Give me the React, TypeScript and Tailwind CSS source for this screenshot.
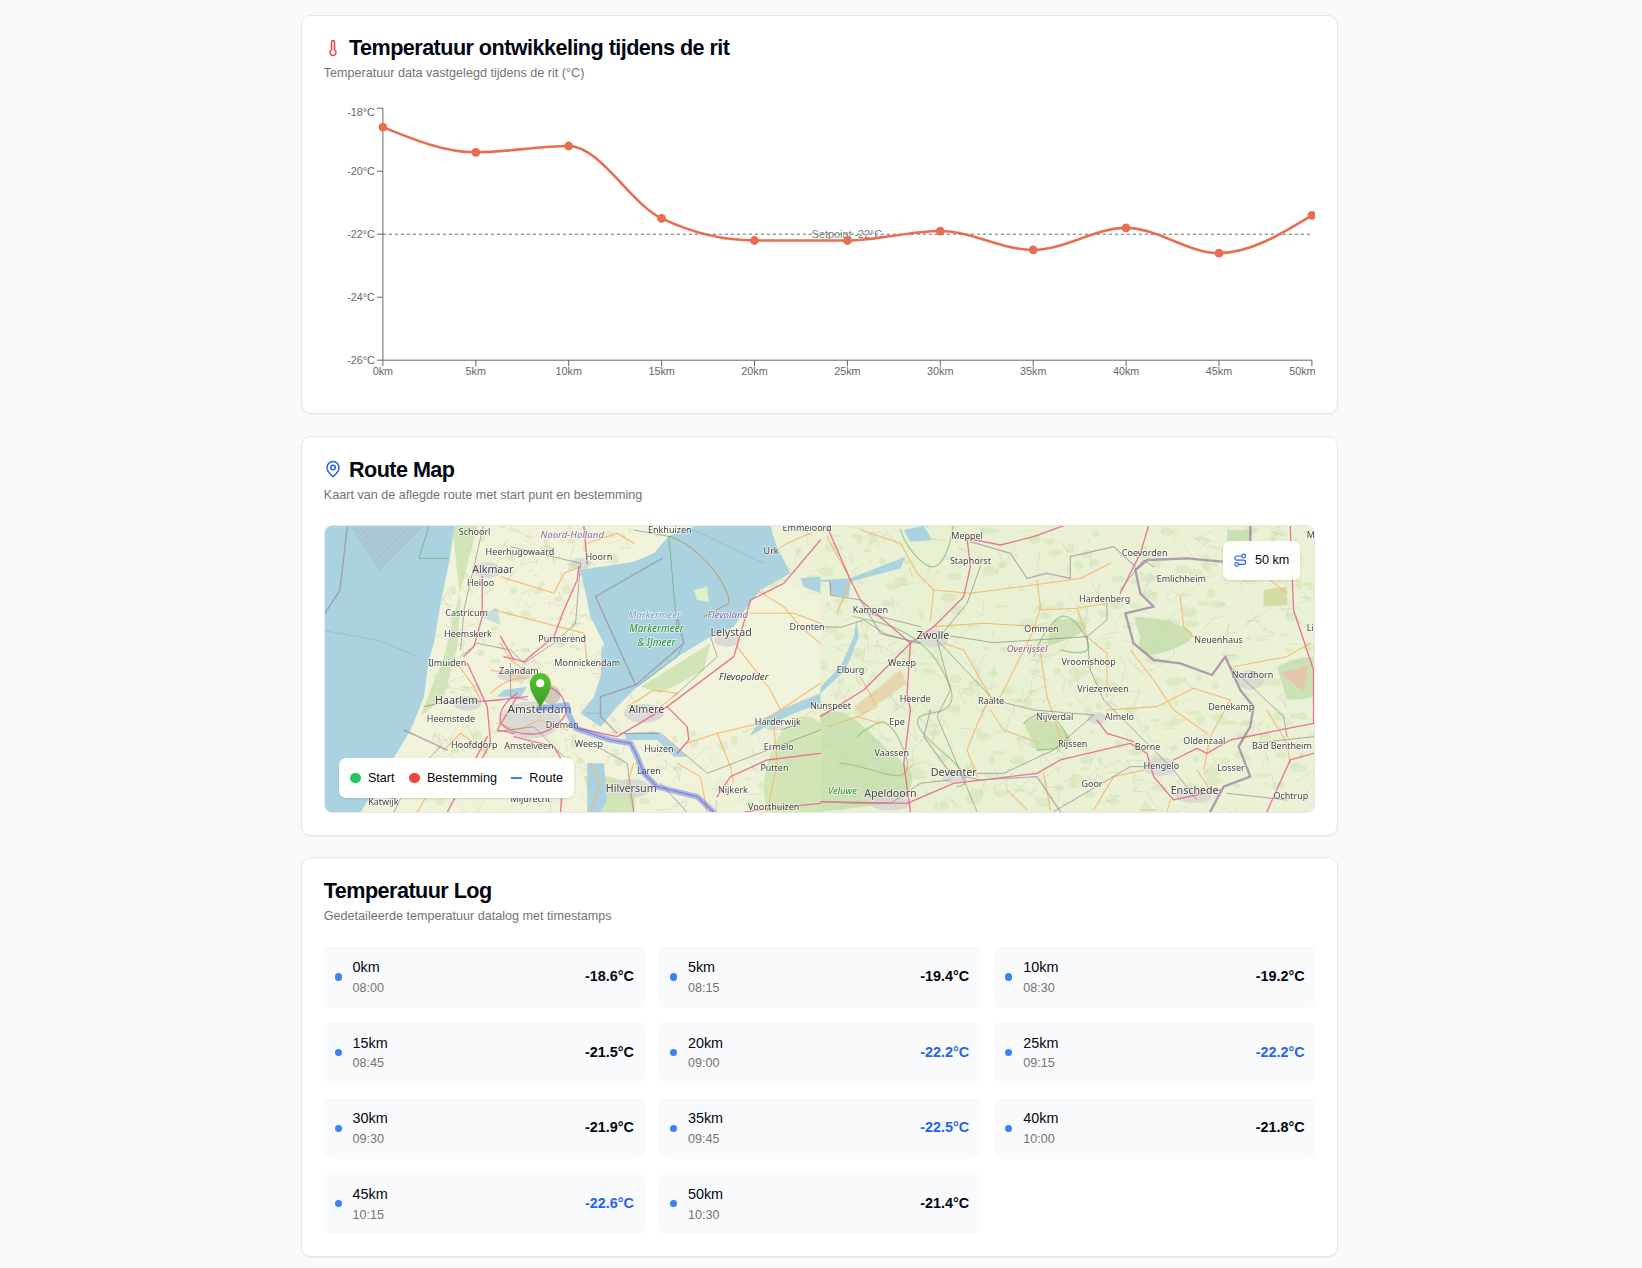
import type { ReactNode } from "react"
import { MapPin, Route, Thermometer } from "lucide-react"

type Reading = { km: number; time: string; temp: number }

const READINGS: Reading[] = [
  { km: 0, time: "08:00", temp: -18.6 },
  { km: 5, time: "08:15", temp: -19.4 },
  { km: 10, time: "08:30", temp: -19.2 },
  { km: 15, time: "08:45", temp: -21.5 },
  { km: 20, time: "09:00", temp: -22.2 },
  { km: 25, time: "09:15", temp: -22.2 },
  { km: 30, time: "09:30", temp: -21.9 },
  { km: 35, time: "09:45", temp: -22.5 },
  { km: 40, time: "10:00", temp: -21.8 },
  { km: 45, time: "10:15", temp: -22.6 },
  { km: 50, time: "10:30", temp: -21.4 },
]

const AXIS = "#666666"
const LINE = "#e76e50"
const X0 = 58.9
const XSTEP = 92.9
const Y0 = 4.2
const YSTEP = 31.5

const xAt = (i: number) => X0 + i * XSTEP
const yAt = (t: number) => Y0 + (-18 - t) * YSTEP

// same curve as d3 curveMonotoneX
function monotonePath(pts: [number, number][]) {
  const n = pts.length
  const d: number[] = []
  const m: number[] = []
  for (let i = 0; i < n - 1; i++) {
    d.push((pts[i + 1][1] - pts[i][1]) / (pts[i + 1][0] - pts[i][0]))
  }
  for (let i = 1; i < n - 1; i++) {
    const h0 = pts[i][0] - pts[i - 1][0]
    const h1 = pts[i + 1][0] - pts[i][0]
    const p = (d[i - 1] * h1 + d[i] * h0) / (h0 + h1)
    m[i] =
      (Math.sign(d[i - 1]) + Math.sign(d[i])) *
        Math.min(Math.abs(d[i - 1]), Math.abs(d[i]), 0.5 * Math.abs(p)) || 0
  }
  m[0] = (3 * d[0] - m[1]) / 2
  m[n - 1] = (3 * d[n - 2] - m[n - 2]) / 2
  let path = `M${pts[0][0]},${pts[0][1]}`
  for (let i = 0; i < n - 1; i++) {
    const h = (pts[i + 1][0] - pts[i][0]) / 3
    path += `C${pts[i][0] + h},${pts[i][1] + h * m[i]} ${pts[i + 1][0] - h},${pts[i + 1][1] - h * m[i + 1]} ${pts[i + 1][0]},${pts[i + 1][1]}`
  }
  return path
}

function TemperatureChart() {
  const pts = READINGS.map((r, i) => [xAt(i), yAt(r.temp)] as [number, number])
  return (
    <svg viewBox="0 0 991.6 288" className="block h-[288px] w-full">
      <line x1={X0} y1={yAt(-22)} x2={xAt(10)} y2={yAt(-22)} stroke={AXIS} strokeDasharray="3 3" />
      <text x={523} y={yAt(-22) + 3.7} textAnchor="middle" fontSize="10.8" fill="#808080">
        Setpoint -22°C
      </text>
      <line x1={X0} y1={Y0} x2={X0} y2={yAt(-26)} stroke={AXIS} />
      <line x1={X0} y1={yAt(-26)} x2={xAt(10)} y2={yAt(-26)} stroke={AXIS} />
      {[-18, -20, -22, -24, -26].map((t) => (
        <g key={t}>
          <line x1={X0 - 6} y1={yAt(t)} x2={X0} y2={yAt(t)} stroke={AXIS} />
          <text
            x={X0 - 8}
            y={(t === -18 ? yAt(t) + 4 : yAt(t)) + 3.7}
            textAnchor="end"
            fontSize="10.8"
            fill={AXIS}
          >
            {t}°C
          </text>
        </g>
      ))}
      {READINGS.map((r, i) => (
        <g key={r.km}>
          <line x1={xAt(i)} y1={yAt(-26)} x2={xAt(i)} y2={yAt(-26) + 6} stroke={AXIS} />
          <text
            x={i === 10 ? 991.6 : xAt(i)}
            y={270.5}
            textAnchor={i === 10 ? "end" : "middle"}
            fontSize="10.8"
            fill={AXIS}
          >
            {r.km}km
          </text>
        </g>
      ))}
      <path d={monotonePath(pts)} fill="none" stroke={LINE} strokeWidth="2.6" />
      {pts.map(([x, y]) => (
        <circle key={x} cx={x} cy={y} r="4.4" fill={LINE} />
      ))}
    </svg>
  )
}

type Label = [number, number, string, number?, string?, boolean?]

const WEST_LABELS: Label[] = [
  [522, 306, "Schoorl"],
  [815, 314, "Noord-Holland", 29, "#8a6a9c", true],
  [1108, 301, "Enkhuizen"],
  [1520, 295, "Emmeloord"],
  [1412, 363, "Urk"],
  [658, 367, "Heerhugowaard"],
  [895, 382, "Hoorn"],
  [577, 418, "Alkmaar", 32],
  [540, 460, "Heiloo"],
  [498, 550, "Castricum"],
  [502, 613, "Heemskerk"],
  [785, 627, "Purmerend"],
  [1062, 555, "Markermeer", 29, "#7f9fc4", true],
  [1068, 597, "Markermeer", 30, "#2f8f2f", true],
  [1068, 637, "& IJmeer", 30, "#2f8f2f", true],
  [1282, 553, "Flevoland", 29, "#8a6a9c", true],
  [1292, 607, "Lelystad", 32],
  [1520, 592, "Dronten"],
  [440, 700, "IJmuiden"],
  [860, 700, "Monnickendam"],
  [655, 723, "Zaandam"],
  [1330, 740, "Flevopolder", 29, "#333333", true],
  [468, 810, "Haarlem", 32],
  [717, 836, "Amsterdam", 35],
  [1038, 838, "Almere", 32],
  [451, 868, "Heemstede"],
  [785, 884, "Diemen"],
  [1432, 877, "Harderwijk"],
  [521, 944, "Hoofddorp"],
  [685, 947, "Amstelveen"],
  [865, 942, "Weesp"],
  [1435, 952, "Ermelo"],
  [1075, 958, "Huizen"],
  [1045, 1022, "Laren"],
  [1422, 1015, "Putten"],
  [992, 1074, "Hilversum", 32],
  [1297, 1080, "Nijkerk"],
  [1420, 1131, "Voorthuizen"],
  [248, 1115, "Katwijk"],
  [690, 1107, "Mijdrecht"],
]

const EAST_LABELS: Label[] = [
  [440, 77, "Meppel"],
  [450, 152, "Staphorst"],
  [973, 130, "Coevorden"],
  [1083, 208, "Emlichheim"],
  [853, 268, "Hardenberg"],
  [150, 300, "Kampen"],
  [663, 357, "Ommen"],
  [338, 375, "Zwolle", 32],
  [1195, 390, "Neuenhaus"],
  [620, 415, "Overijssel", 29, "#8a5a8c", true],
  [805, 455, "Vroomshoop"],
  [90, 480, "Elburg"],
  [245, 458, "Wezep"],
  [1297, 494, "Nordhorn"],
  [848, 537, "Vriezenveen"],
  [284, 568, "Heerde"],
  [512, 574, "Raalte"],
  [1233, 592, "Denekamp"],
  [30, 587, "Nunspeet"],
  [703, 620, "Nijverdal"],
  [897, 621, "Almelo"],
  [230, 635, "Epe"],
  [1152, 694, "Oldenzaal"],
  [757, 703, "Rijssen"],
  [982, 710, "Borne"],
  [1385, 709, "Bad Bentheim"],
  [214, 728, "Vaassen"],
  [1023, 767, "Hengelo"],
  [1232, 773, "Losser"],
  [400, 787, "Deventer", 32],
  [815, 822, "Goor"],
  [1123, 840, "Enschede", 32],
  [210, 850, "Apeldoorn", 32],
  [66, 843, "Veluwe", 28, "#2f8f2f", true],
  [1412, 857, "Ochtrup"],
  [1472, 75, "M"],
  [1470, 355, "Li"],
]

const WEST_ORANGE = [
  "M600 440L760 490L790 430L840 410",
  "M580 540L850 610L860 700",
  "M600 640L630 690L700 740L760 770",
  "M470 700L520 770L540 810",
  "M570 720L660 740",
  "M860 340L950 310L1000 340",
  "M1370 480L1450 530L1500 590L1560 640",
  "M1350 550L1480 550L1560 580",
  "M1310 650L1410 780L1440 840",
  "M1160 940L1250 910L1380 880L1560 760",
  "M1250 910L1290 1010L1300 1060",
  "M1420 890L1430 1000L1400 1147",
  "M1000 1000L980 1060L1000 1147",
  "M870 1000L900 1060L870 1147",
  "M1400 380L1460 340L1530 310",
  "M430 960L480 910L560 970",
  "M1080 830L1130 790L1060 780L980 830",
  "M350 1147L400 1060L480 990",
  "M570 790Q620 740 680 745",
  "M590 880L650 900L720 870L800 900",
  "M1130 1000L1200 1040L1220 1147",
]

const WEST_PINK = [
  "M835 410L830 450L790 540L760 620L700 670L670 695L610 680",
  "M850 288L860 400",
  "M545 440L545 560L520 650L490 680",
  "M500 700L560 830L570 940L530 1010",
  "M680 800L590 810L535 815",
  "M810 890L950 920L1100 830L1300 680L1350 510L1450 460L1560 330",
  "M1100 830L1160 890L1165 930L1130 970",
  "M600 620L640 690",
  "M640 920L760 950L790 1000L780 1147",
  "M1250 1100L1290 1040L1400 990L1560 970",
  "M560 920L440 1147",
  "M650 800L590 900L640 910",
  "M1330 1147L1370 1140L1560 1120",
  "M740 770Q800 790 795 850Q780 890 720 910Q640 920 600 880Q590 830 650 790",
]

const WEST_RAIL = [
  "M630 350L840 400",
  "M840 400L825 580L760 640L670 700L630 660L530 640L480 680",
  "M630 700L630 800L680 810",
  "M535 815L440 815L370 830",
  "M590 905L700 890L790 980",
  "M960 910L1080 910L1220 1030L1560 900",
  "M1230 620L1250 680L1120 800",
  "M1000 1147L980 1000L890 950",
  "M1080 1060L1160 1147",
  "M1440 900L1500 880",
  "M280 1147L330 1040L420 950",
  "M1000 300L1110 320",
  "M550 280L490 540L480 660",
]

const EAST_ORANGE = [
  "M340 240L450 250L640 225L780 205L870 160",
  "M660 290L660 300L770 295L860 280",
  "M120 60L240 100L290 190L340 240L330 330",
  "M20 80L90 210L50 310",
  "M340 350L490 340L660 350",
  "M370 400L430 420L510 560L480 620L440 720L470 800",
  "M650 210L660 290L640 360L580 480L540 560",
  "M770 295L800 380L860 430L860 560",
  "M930 420L1000 510L1060 600L1160 670",
  "M1080 260L1090 350L1130 390",
  "M860 600L1010 590L1120 535L1230 570L1170 680L1150 780",
  "M510 600L550 660L660 700",
  "M120 500L170 590L110 620L180 640",
  "M670 790L690 900",
  "M560 840L620 900",
  "M660 430L680 560L720 680",
  "M1300 170L1400 250",
  "M1470 400L1400 440L1240 470",
  "M1340 600L1400 700L1410 760",
  "M970 780L880 800L820 900",
  "M1050 870L1040 905",
  "M280 760L240 800",
  "M960 900L1010 900",
  "M20 650L110 620",
  "M1130 780L1170 840",
]

const EAST_PINK = [
  "M20 50L90 210L120 270L270 400L340 350L430 260L450 170L440 85",
  "M440 85L540 105L640 80L730 47",
  "M270 400L260 550L270 600L250 760L270 905",
  "M0 875L260 880L400 820L650 790L720 750L930 700L980 730L1000 800L1060 870L1200 840",
  "M830 630L860 670L940 695",
  "M1410 47L1420 300L1480 480L1480 640",
  "M1060 750L1130 715L1160 730L1230 690L1480 640",
  "M1340 905L1410 750L1480 730",
  "M0 620L130 540L270 400",
  "M985 47L960 130L900 250",
]

const EAST_RAIL = [
  "M100 300L300 350",
  "M350 390L520 570L640 600L820 615",
  "M390 378L520 398L800 380L860 330L860 280",
  "M800 380L810 480L850 570L1060 780L1130 870",
  "M480 170L440 280L350 390",
  "M350 390L390 540L350 620L470 905",
  "M0 350L60 352L130 330L200 375L300 400",
  "M470 790L550 790L700 720L820 615",
  "M700 905L930 770L1000 770",
  "M1220 850L1400 870",
  "M0 875L100 880L210 880L300 820L390 810",
  "M1230 470L1390 620L1400 680",
  "M1300 700L1480 680",
  "M900 240L970 150L1000 170",
]

const EAST_GREEN = [
  "M100 320Q150 330 200 345T300 400T385 520T330 610T360 720T410 830",
  "M240 60Q260 120 310 160T390 90T320 50",
  "M640 440Q660 380 700 335T790 370T720 420",
  "M110 680Q130 660 170 640T250 720T190 790T60 760",
  "M610 640Q630 620 660 610T730 660T650 720",
]

// fine field pattern under the main roads, fixed seed so it stays the same
function makeTexture() {
  let seed = 7
  const rnd = () => {
    seed = (seed * 16807) % 2147483647
    return seed / 2147483647
  }
  const blobs: { x: number; y: number; rx: number; ry: number }[] = []
  const lanes: { d: string; warm: boolean }[] = []
  for (let i = 0; i < 520; i++) {
    const x = 110 + rnd() * 880
    blobs.push({ x, y: rnd() * 286, rx: 1.5 + rnd() * (x > 480 ? 7 : 4), ry: 1 + rnd() * 4 })
  }
  for (let i = 0; i < 520; i++) {
    const x = 110 + rnd() * 880
    const y = rnd() * 286
    const x1 = x + (rnd() - 0.5) * 32
    const y1 = y + (rnd() - 0.5) * 32
    const x2 = x1 + (rnd() - 0.5) * 32
    const y2 = y1 + (rnd() - 0.5) * 32
    lanes.push({ d: `M${x} ${y}L${x1} ${y1}L${x2} ${y2}`, warm: rnd() < 0.22 })
  }
  return { blobs, lanes }
}

const TEXTURE = makeTexture()

function MapLines({ d, stroke, width, opacity = 1 }: { d: string[]; stroke: string; width: number; opacity?: number }) {
  return (
    <g fill="none" stroke={stroke} strokeWidth={width} strokeOpacity={opacity} strokeLinejoin="round" strokeLinecap="round">
      {d.map((p) => (
        <path key={p} d={p} />
      ))}
    </g>
  )
}

function MapLabels({ items }: { items: Label[] }) {
  return (
    <g fontFamily="'Noto Sans', sans-serif" textAnchor="middle">
      {items.map(([x, y, text, size = 27, color = "#454545", italic]) => (
        <text
          key={`${text}${y}`}
          x={x}
          y={y + size * 0.35}
          fontSize={size}
          fill={color}
          fontStyle={italic ? "italic" : "normal"}
          stroke="#ffffff"
          strokeOpacity="0.6"
          strokeWidth="5"
          paintOrder="stroke"
        >
          {text}
        </text>
      ))}
    </g>
  )
}

const WEST = "translate(-24.33,-96) scale(0.3333)"
const EAST = "translate(495.67,-16) scale(0.3333)"

function RouteMapArt() {
  return (
    <svg viewBox="0 0 990 286" preserveAspectRatio="none" className="absolute inset-0 h-full w-full blur-[0.45px]">
      <defs>
        <pattern id="hatch" width="14" height="14" patternUnits="userSpaceOnUse" patternTransform="rotate(45)">
          <rect width="14" height="14" fill="#a9c9d7" />
          <line x1="0" y1="0" x2="0" y2="14" stroke="#9fb5c4" strokeWidth="2.5" />
        </pattern>
        <linearGradient id="pin" x1="0" y1="0" x2="0" y2="1">
          <stop offset="0" stopColor="#58c42f" />
          <stop offset="1" stopColor="#3b9a2a" />
        </linearGradient>
        <linearGradient id="land" x1="0" y1="0" x2="1" y2="0">
          <stop offset="0.35" stopColor="#f0f2da" />
          <stop offset="0.6" stopColor="#e8f0d2" />
          <stop offset="1" stopColor="#ebf1d6" />
        </linearGradient>
      </defs>

      {/* land and fields */}
      <rect width="990" height="286" fill="url(#land)" />
      <g fill="#cfe6b6" opacity="0.5">
        {TEXTURE.blobs.map((b, i) => (
          <ellipse key={i} cx={b.x} cy={b.y} rx={b.rx} ry={b.ry} />
        ))}
      </g>
      <g fill="none" strokeWidth="0.6" strokeOpacity="0.55">
        {TEXTURE.lanes.map((l, i) => (
          <path key={i} d={l.d} stroke={l.warm ? "#f7c78c" : "#bcbfae"} />
        ))}
      </g>

      <g transform={EAST}>
        <g fill="#c2dca8" opacity="0.75">
          <path d="M0 610Q70 590 130 650T250 760T230 880L0 905Z" />
          <path d="M610 640Q660 600 730 660T650 720Z" />
          <path d="M940 320Q1020 320 1090 350T1050 420T960 380Z" />
          <path d="M1220 60H1300L1280 110H1220Z" />
          <path d="M1370 470Q1430 440 1480 440V560Q1440 570 1400 570Z" />
          <path d="M700 330Q750 320 790 340T680 410Z" />
        </g>
        <path d="M100 590L240 480L260 520L125 615Z" fill="#e6d3ac" opacity="0.9" />
        <path d="M1380 490L1465 465L1450 545Z" fill="#e8c0a8" opacity="0.8" />
        <path d="M1330 240L1400 230L1400 285L1330 290Z" fill="#d2dca4" />
        <g fill="#d6d6d2" opacity="0.8">
          <ellipse cx="340" cy="385" rx="40" ry="28" />
          <ellipse cx="830" cy="625" rx="28" ry="18" />
          <ellipse cx="1020" cy="770" rx="50" ry="28" />
          <ellipse cx="1120" cy="855" rx="55" ry="24" />
          <ellipse cx="1290" cy="510" rx="40" ry="30" />
          <ellipse cx="210" cy="880" rx="60" ry="22" />
          <ellipse cx="400" cy="800" rx="35" ry="20" />
        </g>
      </g>

      <g transform={WEST}>
        {/* Flevoland polder is plainer than the rest */}
        <path d="M1010 770L1230 620L1340 530L1450 460L1560 500V780L1380 870L1250 910L1160 900L1100 830Z" fill="#f1f3dc" opacity="0.85" />
        <g fill="#cde3b2" opacity="0.85">
          <path d="M455 288L530 288L470 520L430 680L390 780L360 860L430 800L470 650L480 520Z" />
          <path d="M1400 1147Q1370 1040 1430 930T1560 880V1147Z" />
          <path d="M850 1040Q900 1030 960 1050T1000 1147H880Z" />
          <path d="M1020 770L1230 640L1210 720L1080 790Z" />
        </g>
        <g fill="#d6d6d2" opacity="0.85">
          <ellipse cx="690" cy="870" rx="90" ry="55" />
          <ellipse cx="500" cy="820" rx="42" ry="22" />
          <ellipse cx="1030" cy="850" rx="60" ry="28" />
          <ellipse cx="1280" cy="630" rx="40" ry="20" />
          <ellipse cx="990" cy="1075" rx="60" ry="28" />
          <ellipse cx="640" cy="735" rx="50" ry="20" />
          <ellipse cx="840" cy="400" rx="30" ry="16" />
          <ellipse cx="560" cy="420" rx="42" ry="24" />
          <ellipse cx="1420" cy="885" rx="32" ry="16" />
        </g>
        <circle cx="752" cy="795" r="28" fill="#a8a29a" opacity="0.5" />
      </g>

      {/* water goes over the fields */}
      <g transform={WEST} fill="#aad3df">
        <path d="M440 288H73V1147H180L270 1000L330 900L370 800L385 690L400 640L420 520L445 400L462 288Z" />
        <path d="M840 420L1000 395L1060 370L1105 318L1185 288H1410L1425 340L1470 430L1380 480L1340 530L1300 590L1230 620L1130 680L1010 770L950 830L900 890L840 850L880 800L900 740L910 640L870 560Z" />
        <path d="M1500 445L1560 440V490L1510 470Z" />
        <path d="M970 910L1070 905L1160 980L1120 980L1070 930L980 930Z" />
        <path d="M1560 790L1440 840L1380 870L1345 920L1395 890L1470 855L1560 820Z" />
        <path d="M860 1000L910 1000L920 1110L900 1147H860Z" />
        <path d="M610 780L680 770L660 800L590 800Z" />
        <path d="M540 560L590 530L600 585Z" opacity="0.6" />
      </g>
      <g transform={WEST}>
        <path d="M150 288H370L235 422Z" fill="url(#hatch)" />
        <path d="M1180 480L1220 470L1225 515L1190 510Z" fill="#dfeecb" />
      </g>
      <g transform={EAST} fill="#aad3df">
        <path d="M0 210L90 205L230 150L255 140L240 175L90 215L85 260L30 255L25 215H0Z" />
        <path d="M0 530L60 470L100 380L108 330L115 380L75 480L0 550Z" />
        <path d="M250 60L310 47L335 90L270 95Z" />
      </g>

      <g transform={EAST}>
        <MapLines d={EAST_GREEN} stroke="#86c07a" width={4} opacity={0.7} />
        <MapLines d={EAST_ORANGE} stroke="#f8b870" width={3.2} />
        <MapLines d={EAST_RAIL} stroke="#7a7a7a" width={2.2} opacity={0.8} />
        <MapLines d={EAST_PINK} stroke="#e8688c" width={4} opacity={0.9} />
        <MapLines
          d={[
            "M1205 155L1100 145L980 150L945 180L960 250L1000 290L915 310L940 400L1000 450L1080 460L1175 495L1215 440L1260 540L1300 590L1290 650L1255 710L1290 800L1210 830L1170 905",
            "M1290 47V100",
          ]}
          stroke="#9a7f9f"
          width={7}
          opacity={0.75}
        />
        <MapLines
          d={[
            "M450 95L570 130L620 205L680 190L750 205L750 140L880 110L945 170",
            "M30 215V255L120 270L180 370L300 400",
            "M330 600L310 680L390 790L480 810L650 800L720 905",
          ]}
          stroke="#a58ea8"
          width={3.5}
          opacity={0.75}
        />
        <MapLabels items={EAST_LABELS} />
      </g>

      <g transform={WEST}>
        <MapLines d={["M385 288L355 385H440", "M1105 320L1130 600", "M1010 770L1130 680L1145 650"]} stroke="#7fb59a" width={3} />
        <MapLines d={["M1110 320C1200 350 1290 470 1285 520L1210 560"]} stroke="#b89a5c" width={3} />
        <MapLines d={["M1180 300L1390 400", "M73 603L230 630L350 680", "M905 650L905 720", "M860 850L920 850"]} stroke="#9ab4e0" width={2.5} />
        <MapLines d={WEST_ORANGE} stroke="#f8b870" width={3.2} />
        <MapLines d={WEST_RAIL} stroke="#7a7a7a" width={2.2} opacity={0.8} />
        <MapLines d={WEST_PINK} stroke="#e8688c" width={4} opacity={0.9} />
        <MapLines
          d={[
            "M140 288L118 480L73 550",
            "M1085 385L885 500L1005 765L900 800L900 860L950 910",
            "M1005 765L1150 640L1130 560",
            "M310 900L440 960",
          ]}
          stroke="#9a7f9f"
          width={4.5}
          opacity={0.6}
        />
        <MapLabels items={WEST_LABELS} />
        <MapLines
          d={["M715 835L800 825L805 855L825 895L930 930L990 940L1010 980L1030 1030L1070 1070L1190 1100L1240 1147"]}
          stroke="#3b6ff0"
          width={17}
          opacity={0.42}
        />
        <MapLines
          d={["M825 895L930 930L990 940L1010 980L1030 1030L1070 1070L1190 1100L1240 1147"]}
          stroke="#8f3fb0"
          width={3.5}
          opacity={0.55}
        />
        <path
          d="M719 835C712 812 688 792 688 762A31.5 33 0 0 1 751 762C751 792 727 812 719 835Z"
          fill="url(#pin)"
        />
        <circle cx="719" cy="760" r="12" fill="#ffffff" />
      </g>
    </svg>
  )
}

function Card({ icon, title, subtitle, children }: { icon?: ReactNode; title: string; subtitle: string; children: ReactNode }) {
  return (
    <section className="rounded-[10px] border border-[#e5e7eb] bg-white p-[21.6px] shadow-[0_1px_2px_rgba(0,0,0,0.06)]">
      <h2 className="flex items-center gap-[7.2px] text-[21.6px] leading-[21.6px] font-bold tracking-[-0.54px] text-[#030712]">
        {icon}
        {title}
      </h2>
      <p className="mt-[5.4px] text-[12.6px] leading-[18px] text-[#737373]">{subtitle}</p>
      <div className="mt-[21.6px]">{children}</div>
    </section>
  )
}

function LogCell({ reading }: { reading: Reading }) {
  return (
    <div className="flex items-center justify-between rounded-[7px] bg-[#f9fafb] p-[10.8px]">
      <div className="flex items-center gap-[10.8px]">
        <span className="size-[7.2px] rounded-full bg-[#3b82f6]" />
        <div>
          <div className="text-[14.4px] leading-[21.6px] text-[#030712]">{reading.km}km</div>
          <div className="text-[12.6px] leading-[18px] text-[#737373]">{reading.time}</div>
        </div>
      </div>
      <span className={reading.temp <= -22 ? "text-[14.4px] font-bold text-[#2563eb]" : "text-[14.4px] font-bold text-[#030712]"}>
        {reading.temp.toFixed(1)}°C
      </span>
    </div>
  )
}

export default function App() {
  return (
    <div className="min-h-[1268px] bg-[#f9fafb] font-['Liberation_Sans',Arial,sans-serif]">
      <div className="ml-[301.2px] flex w-[1036.8px] flex-col gap-[21.6px] pt-[14.6px]">
        <Card
          icon={<Thermometer className="size-[18px] text-[#ef4444]" />}
          title="Temperatuur ontwikkeling tijdens de rit"
          subtitle="Temperatuur data vastgelegd tijdens de rit (°C)"
        >
          <TemperatureChart />
        </Card>

        <Card
          icon={<MapPin className="size-[18px] text-[#2563eb]" />}
          title="Route Map"
          subtitle="Kaart van de aflegde route met start punt en bestemming"
        >
          <div className="relative h-[288px] overflow-hidden rounded-[8px] border border-[#e5e7eb]">
            <RouteMapArt />
            <div className="absolute top-[14.4px] right-[14.4px] flex items-center gap-[7.2px] rounded-[7px] bg-white/95 p-[10.8px] text-[12.6px] leading-[18px] text-[#030712] shadow-sm">
              <Route className="size-[14.4px] text-[#2563eb]" />
              50 km
            </div>
            <div className="absolute bottom-[14.4px] left-[14.4px] flex items-center gap-[14.4px] rounded-[7px] bg-white/95 p-[10.8px] text-[12.6px] leading-[18px] text-[#030712] shadow-sm">
              <div className="flex items-center gap-[7.2px]">
                <span className="size-[10.8px] rounded-full bg-[#22c55e]" />
                Start
              </div>
              <div className="flex items-center gap-[7.2px]">
                <span className="size-[10.8px] rounded-full bg-[#ef4444]" />
                Bestemming
              </div>
              <div className="flex items-center gap-[7.2px]">
                <span className="h-[2px] w-[10.8px] bg-[#3b82f6]" />
                Route
              </div>
            </div>
          </div>
        </Card>

        <Card title="Temperatuur Log" subtitle="Gedetaileerde temperatuur datalog met timestamps">
          <div className="grid grid-cols-3 gap-[14.4px]">
            {READINGS.map((r) => (
              <LogCell key={r.km} reading={r} />
            ))}
          </div>
        </Card>
      </div>
    </div>
  )
}
